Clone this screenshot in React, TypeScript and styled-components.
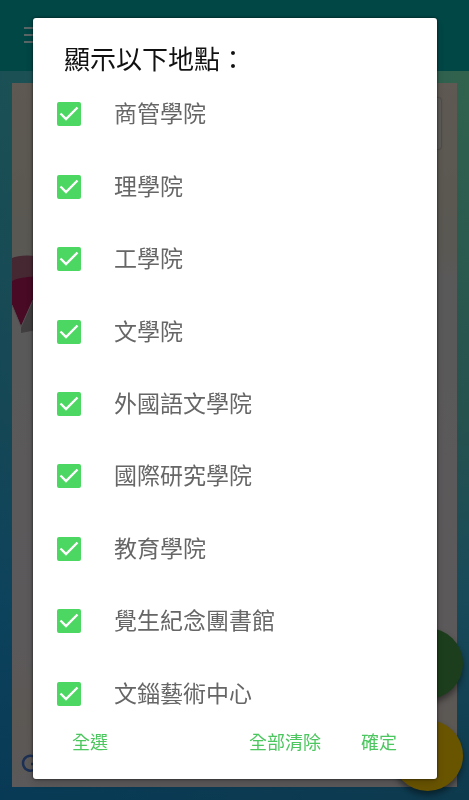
import React, { useState } from "react";
import styled, { createGlobalStyle } from "styled-components";

const GlobalStyle = createGlobalStyle`
  *, *::before, *::after { box-sizing: border-box; }
  body {
    margin: 0;
    font-family: Roboto, "Noto Sans CJK TC", sans-serif;
  }
`;

const Page = styled.div`
  display: flex;
  flex-direction: column;
  min-height: 100vh;
  background:
    linear-gradient(to right, rgba(0, 116, 190, 0.45), transparent),
    linear-gradient(#64c89c 0%, #60c49c 12%, #4ca49c 52%, #3094b4 75%, #1c749c 100%);
`;

const AppBar = styled.header`
  display: flex;
  align-items: center;
  height: 71px;
  padding: 0 24px;
  background: #008e8c;
`;

const MenuButton = styled.button`
  display: flex;
  padding: 0;
  border: 0;
  background: none;
  color: #b4cccc;
`;

const MapArea = styled.main`
  position: relative;
  display: flex;
  flex: 1;
  margin: 12px 12px 13px;
  background: linear-gradient(#bcb2a4 0%, #b4b0a4 23%, #b4b2b4 28%, #b8b2b6 80%, #b8b0a8 90%, #b6b2b4 100%);
`;

const MapDrawing = styled.svg`
  position: absolute;
  left: 0;
  top: 170px;
`;

const MapControl = styled.div`
  position: absolute;
  top: 15px;
  right: 16px;
  width: 50px;
  height: 51px;
  border-radius: 2px;
  background: #b8b4ac;
  box-shadow: 0 0 2px rgba(0, 0, 0, 0.5);
`;

const MapLogo = styled.svg`
  position: absolute;
  left: 9px;
  bottom: 13px;
`;

const FabStack = styled.div`
  position: absolute;
  right: -6px;
  bottom: -4px;
  display: flex;
  flex-direction: column;
  gap: 21px;
`;

const Fab = styled.button<{ $color: string }>`
  width: 71px;
  height: 71px;
  padding: 0;
  border: 0;
  border-radius: 50%;
  background: ${(p) => p.$color};
  box-shadow: 0 4px 6px rgba(0, 0, 0, 0.45);
`;

const Scrim = styled.div`
  position: fixed;
  inset: 0;
  display: flex;
  padding: 18px 32px 21px 33px;
  background: rgba(0, 0, 0, 0.5);
`;

const Dialog = styled.form`
  display: flex;
  flex: 1;
  flex-direction: column;
  overflow: auto;
  border-radius: 3px;
  background: #fff;
  box-shadow: 0 0 3px rgba(0, 0, 0, 0.7), 0 4px 10px rgba(0, 0, 0, 0.15);
`;

const Title = styled.h1`
  margin: 0;
  padding: 25px 31px 0;
  color: #111;
  font-size: 26px;
  font-weight: 400;
  line-height: 35px;
`;

const PlaceList = styled.ul`
  display: grid;
  flex: 1;
  grid-auto-rows: minmax(48px, 1fr);
  margin: 0;
  padding: 0 24px;
  list-style: none;
`;

const PlaceRow = styled.label`
  display: flex;
  align-items: center;
  gap: 33px;
  height: 100%;
  cursor: pointer;
`;

const PlaceName = styled.span`
  padding-top: 2px;
  color: #666;
  font-size: 23px;
  line-height: 32px;
`;

const CheckSlot = styled.span`
  display: grid;
  flex: none;
`;

const Checkbox = styled.input`
  grid-area: 1 / 1;
  width: 24px;
  height: 24px;
  margin: 0;
  border: 2px solid #757575;
  border-radius: 2px;
  appearance: none;

  &:checked {
    border-color: #4cd662;
    background: #4cd662;
  }

  &:not(:checked) + svg {
    visibility: hidden;
  }
`;

const CheckMark = styled.svg`
  grid-area: 1 / 1;
  pointer-events: none;
`;

const Actions = styled.footer`
  display: flex;
  gap: 16px;
  padding: 0 28px 23px 27px;
`;

const ActionButton = styled.button<{ $push?: boolean }>`
  margin-right: ${(p) => (p.$push ? "auto" : "0")};
  padding: 0 12px;
  border: 0;
  background: none;
  color: #4cc65e;
  font-family: inherit;
  font-size: 18px;
  line-height: 26px;
  cursor: pointer;
`;

const PLACES = [
  "商管學院",
  "理學院",
  "工學院",
  "文學院",
  "外國語文學院",
  "國際研究學院",
  "教育學院",
  "覺生紀念團書館",
  "文錙藝術中心",
];

export default function App() {
  const [selected, setSelected] = useState<string[]>(PLACES);

  const toggle = (place: string) =>
    setSelected((current) =>
      current.includes(place) ? current.filter((p) => p !== place) : [...current, place],
    );

  return (
    <>
      <GlobalStyle />
      <Page>
        <AppBar>
          <MenuButton type="button" aria-label="選單">
            <svg width="24" height="18" viewBox="0 0 24 18" fill="currentColor" aria-hidden="true">
              <path d="M0 0h24v2H0zM0 7h24v2H0zM0 14h24v2H0z" />
            </svg>
          </MenuButton>
        </AppBar>
        <MapArea>
          <MapDrawing width="40" height="86" viewBox="0 0 40 86" aria-hidden="true">
            <path d="M0 5Q10 0 40 5V40H0Z" fill="#8c5064" />
            <path d="M0 28Q10 22 40 24V54H21L9 73L0 52Z" fill="#901448" />
            <path d="M40 47H21L9 73V80L40 74Z" fill="#807c7e" />
            <path d="M0 52L9 74L21 47" fill="none" stroke="#a89ca2" strokeWidth="1" />
          </MapDrawing>
          <MapControl />
          <MapLogo width="20" height="20" viewBox="0 0 20 20" fill="none" aria-hidden="true">
            <path d="M15 4A7.5 7.5 0 1 0 17 10H10" stroke="#385fa8" strokeWidth="2.500" />
          </MapLogo>
          <FabStack>
            <Fab type="button" aria-label="篩選地點" $color="#387c38" />
            <Fab type="button" aria-label="定位" $color="#d2a800" />
          </FabStack>
        </MapArea>
      </Page>
      <Scrim>
        <Dialog
          role="dialog"
          aria-modal="true"
          aria-labelledby="places-title"
          onSubmit={(event: React.FormEvent) => event.preventDefault()}
        >
          <Title id="places-title">顯示以下地點：</Title>
          <PlaceList>
            {PLACES.map((place) => (
              <li key={place}>
                <PlaceRow>
                  <CheckSlot>
                    <Checkbox
                      type="checkbox"
                      checked={selected.includes(place)}
                      onChange={() => toggle(place)}
                    />
                    <CheckMark width="24" height="24" viewBox="0 0 24 24" fill="none" aria-hidden="true">
                      <path d="M3.5 11.500L9 17L20.500 5.500" stroke="#fff" strokeWidth="2.400" />
                    </CheckMark>
                  </CheckSlot>
                  <PlaceName>{place}</PlaceName>
                </PlaceRow>
              </li>
            ))}
          </PlaceList>
          <Actions>
            <ActionButton type="button" $push onClick={() => setSelected(PLACES)}>
              全選
            </ActionButton>
            <ActionButton type="button" onClick={() => setSelected([])}>
              全部清除
            </ActionButton>
            <ActionButton type="submit">確定</ActionButton>
          </Actions>
        </Dialog>
      </Scrim>
    </>
  );
}
